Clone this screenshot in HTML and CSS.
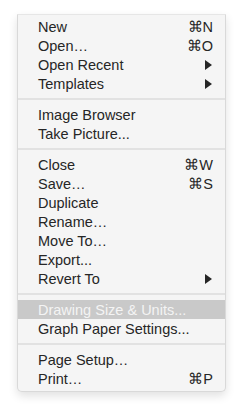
FILE: index.html
```html
<!DOCTYPE html>
<html lang="en">
<head>
    <meta charset="UTF-8">
    <title>File menu</title>
    <link rel="stylesheet" href="styles.css">
</head>
<body>
    <div class="menu">
        <div class="item"><span>New</span><span class="key">⌘N</span></div>
        <div class="item"><span>Open…</span><span class="key">⌘O</span></div>
        <div class="item"><span>Open Recent</span><span class="arrow"></span></div>
        <div class="item"><span>Templates</span><span class="arrow"></span></div>
        <div class="sep"></div>
        <div class="item"><span>Image Browser</span></div>
        <div class="item"><span>Take Picture...</span></div>
        <div class="sep"></div>
        <div class="item"><span>Close</span><span class="key">⌘W</span></div>
        <div class="item"><span>Save…</span><span class="key">⌘S</span></div>
        <div class="item"><span>Duplicate</span></div>
        <div class="item"><span>Rename…</span></div>
        <div class="item"><span>Move To…</span></div>
        <div class="item"><span>Export...</span></div>
        <div class="item"><span>Revert To</span><span class="arrow"></span></div>
        <div class="sep"></div>
        <div class="item selected"><span>Drawing Size &amp; Units...</span></div>
        <div class="item"><span>Graph Paper Settings...</span></div>
        <div class="sep"></div>
        <div class="item"><span>Page Setup…</span></div>
        <div class="item"><span>Print…</span><span class="key">⌘P</span></div>
    </div>
</body>
</html>
```

FILE: styles.css
```css
* {
    margin: 0;
    padding: 0;
    box-sizing: border-box;
}

body {
    font-family: 'Liberation Sans', Arial, sans-serif;
    background: #ffffff;
    padding: 14px 17px;
}

.menu {
    width: 209px;
    background: #f5f5f5;
    border: 1px solid #d9d9d9;
    border-top-color: #e6e6e6;
    border-radius: 1px 1px 5px 5px;
    box-shadow: 0 4px 10px rgba(0,0,0,0.12);
    padding: 2px 0 3px;
}

.item {
    display: flex;
    justify-content: space-between;
    align-items: center;
    height: 19px;
    padding: 0 12px 0 20px;
    font-size: 14.5px;
    color: #262626;
}

.item.selected {
    background: #c9c9c9;
    color: #f4f4f4;
}

.arrow {
    width: 0;
    height: 0;
    border-left: 7px solid #262626;
    border-top: 5px solid transparent;
    border-bottom: 5px solid transparent;
    margin-right: 1px;
}

.sep {
    height: 2px;
    background: #e2e2e2;
    margin: 5px 0;
}
```
